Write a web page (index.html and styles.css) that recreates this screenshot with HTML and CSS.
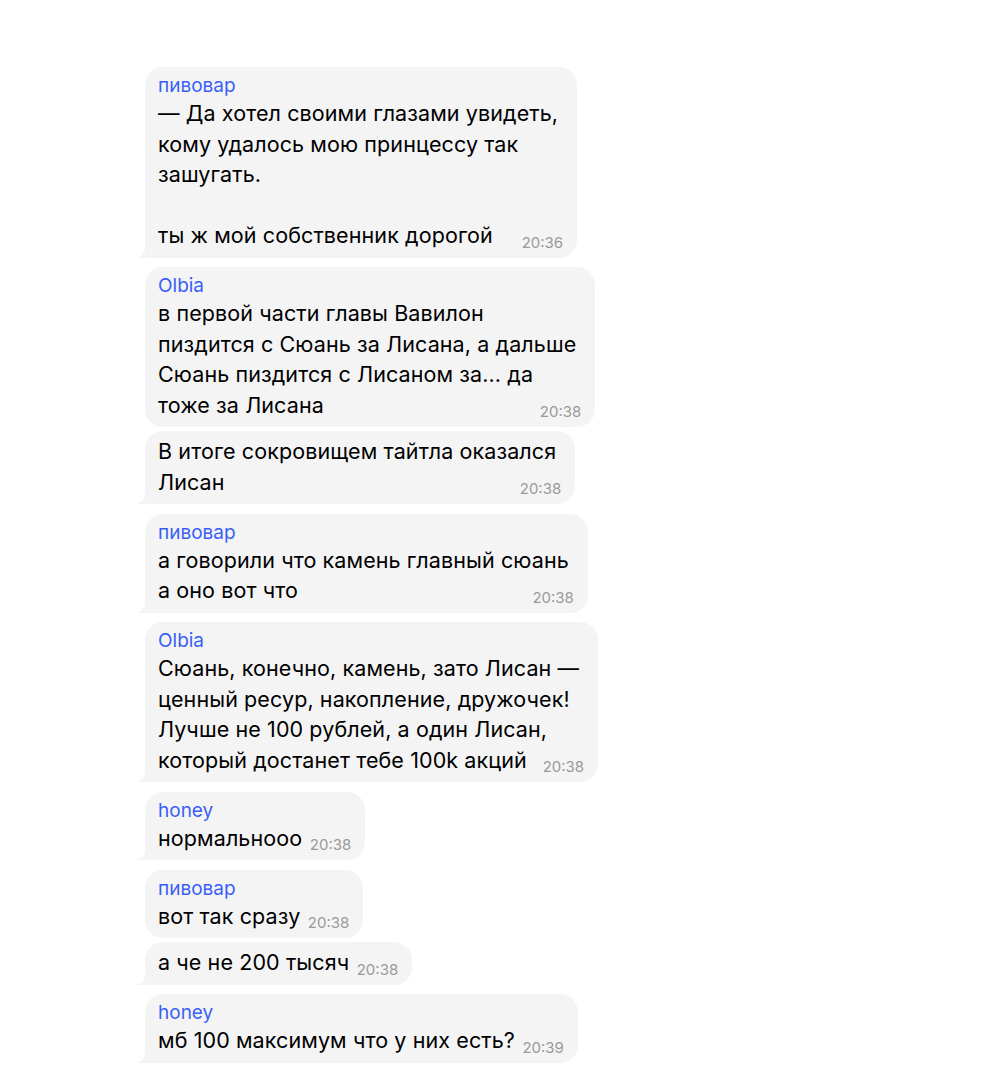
FILE: index.html
```html
<!DOCTYPE html>
<html lang="ru">
<head>
  <meta charset="UTF-8">
  <title>Чат</title>
  <link rel="stylesheet" href="styles.css">
</head>
<body>
  <main class="chat">
    <div class="group">
      <div class="bubble tail">
        <div class="name">пивовар</div>
        <div class="text">— Да хотел своими глазами увидеть,<br>кому удалось мою принцессу так<br>зашугать.<br><br>ты ж мой собственник дорогой<span class="spacer"></span></div>
        <span class="time">20:36</span>
      </div>
    </div>
    <div class="group">
      <div class="bubble">
        <div class="name">Olbia</div>
        <div class="text">в первой части главы Вавилон<br>пиздится с Сюань за Лисана, а дальше<br>Сюань пиздится с Лисаном за... да<br>тоже за Лисана<span class="spacer"></span></div>
        <span class="time">20:38</span>
      </div>
      <div class="bubble tail plain">
        <div class="text">В итоге сокровищем тайтла оказался<br>Лисан<span class="spacer"></span></div>
        <span class="time">20:38</span>
      </div>
    </div>
    <div class="group">
      <div class="bubble tail">
        <div class="name">пивовар</div>
        <div class="text">а говорили что камень главный сюань<br>а оно вот что<span class="spacer"></span></div>
        <span class="time">20:38</span>
      </div>
    </div>
    <div class="group">
      <div class="bubble tail">
        <div class="name">Olbia</div>
        <div class="text">Сюань, конечно, камень, зато Лисан —<br>ценный ресур, накопление, дружочек!<br>Лучше не 100 рублей, а один Лисан,<br>который достанет тебе 100k акций<span class="spacer"></span></div>
        <span class="time">20:38</span>
      </div>
    </div>
    <div class="group">
      <div class="bubble tail">
        <div class="name">honey</div>
        <div class="text">нормальнооо<span class="spacer"></span></div>
        <span class="time">20:38</span>
      </div>
    </div>
    <div class="group">
      <div class="bubble">
        <div class="name">пивовар</div>
        <div class="text">вот так сразу<span class="spacer"></span></div>
        <span class="time">20:38</span>
      </div>
      <div class="bubble tail plain">
        <div class="text">а че не 200 тысяч<span class="spacer"></span></div>
        <span class="time">20:38</span>
      </div>
    </div>
    <div class="group">
      <div class="bubble tail">
        <div class="name">honey</div>
        <div class="text">мб 100 максимум что у них есть?<span class="spacer"></span></div>
        <span class="time">20:39</span>
      </div>
    </div>
  </main>
</body>
</html>
```
FILE: styles.css
```css
* {
  margin: 0;
  padding: 0;
  box-sizing: border-box;
}
body {
  background: #fff;
  color: #000;
  font-family: Inter, "Noto Sans", sans-serif;
}
.chat {
  display: flex;
  flex-direction: column;
  align-items: flex-start;
  gap: 9.5px;
  padding: 67px 0 0 145px;
}
.group {
  display: flex;
  flex-direction: column;
  align-items: flex-start;
  gap: 4px;
}
.bubble {
  position: relative;
  background: #f4f4f5;
  border-radius: 18px;
  padding: 7px 19px 7px 13px;
}
.bubble.plain {
  padding-top: 5px;
}
.bubble.tail {
  border-bottom-left-radius: 4px;
}
.bubble.tail::before {
  content: "";
  position: absolute;
  left: -8px;
  bottom: 0;
  width: 22px;
  height: 18px;
  background: #f4f4f5;
  border-bottom-right-radius: 16px 14px;
}
.bubble.tail::after {
  content: "";
  position: absolute;
  left: -12px;
  bottom: 0;
  width: 12px;
  height: 20px;
  background: #fff;
  border-bottom-right-radius: 10px;
}
.name {
  position: relative;
  z-index: 1;
  font-size: 19px;
  line-height: 24px;
  color: #3a5ff6;
}
.text {
  position: relative;
  z-index: 1;
  font-size: 21.5px;
  letter-spacing: 0.1px;
  line-height: 30.5px;
  white-space: nowrap;
}
.spacer {
  display: inline-block;
  width: 44px;
}
.time {
  position: absolute;
  right: 14px;
  bottom: 8px;
  z-index: 1;
  font-size: 15px;
  line-height: 14px;
  color: #9a9a9a;
}
```
